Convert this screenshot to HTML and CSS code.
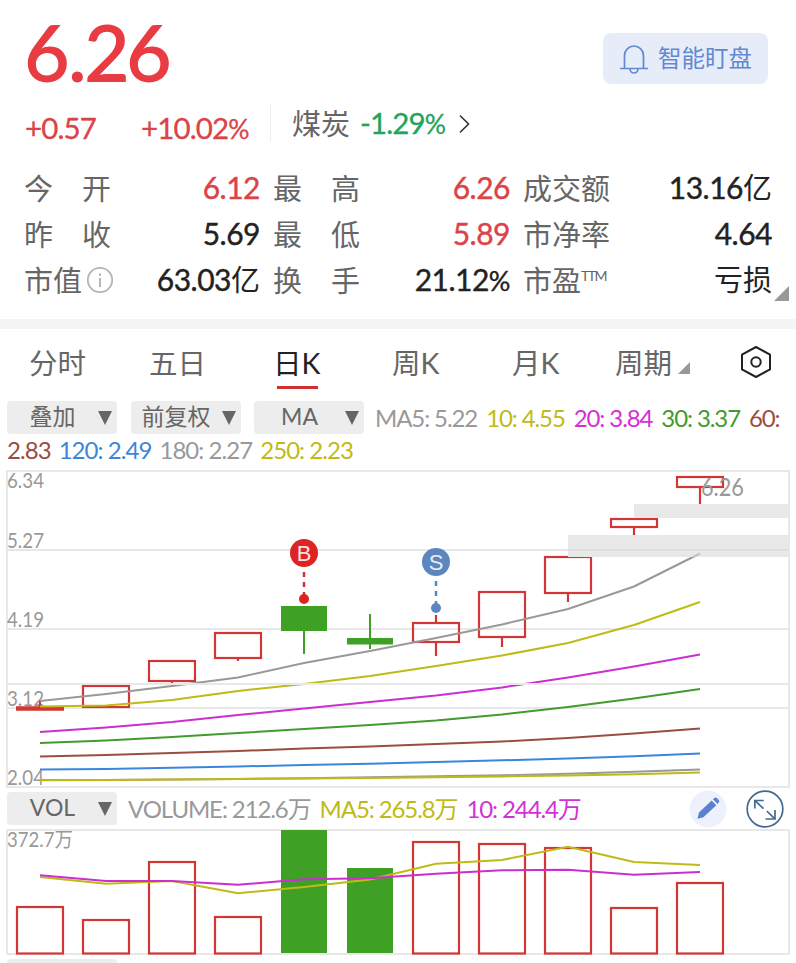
FILE: index.html
```html
<!DOCTYPE html>
<html lang="zh-CN">
<head>
    <meta charset="UTF-8">
    <meta name="viewport" content="width=device-width, initial-scale=1.0">
    <title>日K</title>
    <link rel="stylesheet" href="styles.css">
</head>
<body>
    <header class="quote">
        <div class="price">6<span>.</span>26</div>
        <button class="watch-btn">
            <svg width="30" height="30" viewBox="0 0 30 30" fill="none" stroke="#6288d2" stroke-width="1.7">
                <path d="M5.5 24.5V11.5a9.5 9.5 0 0 1 19 0v13M1 24.5h28M11 25a4 4 0 0 0 8 0"/>
            </svg>
            <span>智能盯盘</span>
        </button>
    </header>

    <div class="change-row">
        <span class="change">+0.57</span>
        <span class="percent">+10.02<small>%</small></span>
        <a class="sector">
            <span class="sector-name">煤炭</span>
            <span class="sector-change">-1.29<small>%</small></span>
            <svg width="11" height="20" viewBox="0 0 11 20" fill="none" stroke="#333" stroke-width="1.6"><path d="M1 1.5l8.5 8.5L1 18.5"/></svg>
        </a>
    </div>

    <section class="stats">
        <div class="stat"><span class="label wide"><i>今</i><i>开</i></span><b class="up">6.12</b></div>
        <div class="stat"><span class="label wide"><i>最</i><i>高</i></span><b class="up">6.26</b></div>
        <div class="stat"><span class="label">成交额</span><b>13.16<em>亿</em></b></div>
        <div class="stat"><span class="label wide"><i>昨</i><i>收</i></span><b>5.69</b></div>
        <div class="stat"><span class="label wide"><i>最</i><i>低</i></span><b class="up">5.89</b></div>
        <div class="stat"><span class="label">市净率</span><b>4.64</b></div>
        <div class="stat">
            <span class="label">市值<svg class="info" width="28" height="28" viewBox="0 0 28 28"><circle cx="14" cy="14" r="12.2" fill="none" stroke="#b5b5b5" stroke-width="1.8"/><path d="M13 7.5h2v2.3h-2zM13 12h2v9h-2z" fill="#b5b5b5"/></svg></span>
            <b>63.03<em>亿</em></b>
        </div>
        <div class="stat"><span class="label wide"><i>换</i><i>手</i></span><b>21.12<small>%</small></b></div>
        <div class="stat"><span class="label">市盈<sup>TTM</sup></span><b><em>亏损</em></b></div>
        <span class="corner"></span>
    </section>

    <nav class="tabs">
        <a class="tab">分时</a>
        <a class="tab">五日</a>
        <a class="tab active">日K</a>
        <a class="tab">周K</a>
        <a class="tab">月K</a>
        <a class="tab more">周期</a>
        <a class="settings">
            <svg width="32" height="34" viewBox="0 0 32 34" fill="none" stroke="#222" stroke-width="2" stroke-linejoin="round">
                <path d="M16 2l14 7.6v14.8L16 32 2 24.4V9.6z"/>
                <circle cx="16" cy="17" r="4.7"/>
            </svg>
        </a>
    </nav>

    <div class="toolbar">
        <button class="chip"><span>叠加</span></button>
        <button class="chip"><span>前复权</span></button>
        <button class="chip"><span>MA</span></button>
        <div class="legend">
            <span class="ma5">MA5: 5.22</span>
            <span class="ma10">10: 4.55</span>
            <span class="ma20">20: 3.84</span>
            <span class="ma30">30: 3.37</span>
            <span class="ma60">60:</span>
        </div>
    </div>
    <div class="legend second">
        <span class="ma60">2.83</span>
        <span class="ma120">120: 2.49</span>
        <span class="ma5">180: 2.27</span>
        <span class="ma10">250: 2.23</span>
    </div>

    <svg class="chart" width="796" height="326" viewBox="0 0 796 326">
        <g class="grid">
            <rect x="7" y="6" width="782" height="316"/>
            <path d="M7 85H789M7 164H789M7 243H789"/>
        </g>
        <g class="axis">
            <text x="7" y="23" textLength="37" lengthAdjust="spacingAndGlyphs">6.34</text>
            <text x="7" y="83" textLength="37" lengthAdjust="spacingAndGlyphs">5.27</text>
            <text x="7" y="162" textLength="37" lengthAdjust="spacingAndGlyphs">4.19</text>
            <text x="7" y="241" textLength="37" lengthAdjust="spacingAndGlyphs">3.12</text>
            <text x="7" y="320" textLength="37" lengthAdjust="spacingAndGlyphs">2.04</text>
        </g>

        <!-- candles, one every 66px -->
        <g class="rise">
            <path d="M40 236v6M172 216v2M238 193v3M436 150v8M436 177v14M502 172v10M568 128v9M634 62v8M700 22v17"/>
            <path d="M16 243.5H64" stroke-width="4.5"/>
            <rect x="83" y="221" width="46" height="21"/>
            <rect x="149" y="196" width="46" height="20"/>
            <rect x="215" y="168" width="46" height="25"/>
            <rect x="413" y="158" width="46" height="19"/>
            <rect x="479" y="127" width="46" height="45"/>
            <rect x="545" y="92" width="46" height="36"/>
            <rect x="611" y="54" width="46" height="8"/>
            <rect x="677" y="12" width="46" height="10"/>
        </g>
        <g class="fall">
            <rect x="281" y="141" width="46" height="25"/>
            <rect x="303" y="166" width="2" height="23"/>
            <rect x="347" y="173" width="46" height="6.5"/>
            <rect x="369" y="149" width="2" height="35"/>
        </g>

        <g class="lines">
            <polyline class="ma5" points="40,236 106,229 172,221 238,212.5 304,198 370,186 436,173 502,159.5 568,144 634,121.5 700,88.5"/>
            <polyline class="ma10" points="40,241.5 106,240.5 172,235 238,226 304,219 370,211 436,201 502,190.5 568,178 634,160 700,137"/>
            <polyline class="ma20" points="40,267 106,262.5 172,257 238,250 304,243.5 370,237 436,230.5 502,222.5 568,212.5 634,201.5 700,189.5"/>
            <polyline class="ma30" points="40,278 106,275.5 172,272 238,268 304,264 370,260 436,255.5 502,249.5 568,242 634,233.5 700,224"/>
            <polyline class="ma60" points="40,291.5 106,290 172,288 238,286 304,283.5 370,281.5 436,279 502,276.5 568,273 634,268.5 700,263.5"/>
            <polyline class="ma120" points="40,304.5 106,304 172,302.8 238,301.5 304,300 370,298.7 436,297 502,295.3 568,293.5 634,291.2 700,288.5"/>
            <polyline class="ma5" points="40,315 106,315 172,314.5 238,314 304,313.3 370,312.3 436,311.3 502,310.3 568,308.7 634,306.7 700,304.5"/>
            <polyline class="ma10" points="40,315.3 106,315 172,314.5 238,314 304,313.4 370,312.9 436,312.2 502,311.4 568,310.4 634,309.2 700,307.5"/>
        </g>

        <!-- price gaps -->
        <g class="gap">
            <rect x="634" y="39" width="155" height="14"/>
            <rect x="568" y="70" width="221" height="22"/>
            <path d="M7 219H789"/>
        </g>
        <path class="gap-line" d="M568 85H789"/>
        <path class="gap-ma" d="M693 92L700 88.5"/>
        <text class="last" x="701" y="31" textLength="43" lengthAdjust="spacingAndGlyphs">6.26</text>

        <g class="mark buy">
            <path d="M304 107v23"/>
            <circle cx="304" cy="134" r="5"/>
            <circle cx="304" cy="88" r="14"/>
            <text x="304" y="96">B</text>
        </g>
        <g class="mark sell">
            <path d="M436 116v23"/>
            <circle cx="436" cy="143" r="5"/>
            <circle cx="436" cy="97" r="14"/>
            <text x="436" y="105">S</text>
        </g>
    </svg>

    <div class="toolbar volume">
        <button class="chip"><span>VOL</span></button>
        <div class="legend">
            <span class="ma5">VOLUME: 212.6万</span>
            <span class="ma10">MA5: 265.8万</span>
            <span class="ma20">10: 244.4万</span>
        </div>
        <div class="tools">
            <svg width="38" height="38" viewBox="0 0 38 38">
                <circle cx="19" cy="19" r="18.5" fill="#edf1fb"/>
                <path d="M8.5 28.7l1.5-6.2L22.7 10.5l4.6 4.7L14.4 27.2zM24 9.3l1.3-1.2a2 2 0 0 1 2.7 0l1.7 1.8a2 2 0 0 1 0 2.7l-1.2 1.3z" fill="#5b80d0"/>
            </svg>
            <svg width="38" height="38" viewBox="0 0 38 38" fill="none" stroke="#456990" stroke-width="1.7">
                <circle cx="19" cy="19" r="17.8"/>
                <path d="M8.8 18.5V10.5h9M9 10.7l8.5 8M29 20v9h-9.5M20.8 21l8 7.8"/>
            </svg>
        </div>
    </div>

    <svg class="chart" width="796" height="133" viewBox="0 0 796 133">
        <g class="grid"><rect x="7" y="4" width="782" height="124"/></g>
        <text class="vol-max" x="7" y="21" textLength="66" lengthAdjust="spacingAndGlyphs">372.7万</text>
        <g class="rise">
            <rect x="17" y="81" width="46" height="46.5"/>
            <rect x="83" y="94" width="46" height="33.5"/>
            <rect x="149" y="36" width="46" height="91.5"/>
            <rect x="215" y="91" width="46" height="36.5"/>
            <rect x="413" y="16" width="46" height="111.5"/>
            <rect x="479" y="18" width="46" height="109.5"/>
            <rect x="545" y="22" width="46" height="105.5"/>
            <rect x="611" y="82" width="46" height="45.5"/>
            <rect x="677" y="57" width="46" height="70.5"/>
        </g>
        <g class="fall">
            <rect x="281" y="4" width="46" height="123"/>
            <rect x="347" y="42" width="46" height="85"/>
        </g>
        <g class="lines">
            <polyline class="ma10" points="40,51 106,57.7 172,55 238,67.3 304,61 370,53.5 436,37.7 502,34 568,20.7 634,36 700,39"/>
            <polyline class="ma20" points="40,49.3 106,55 172,55 238,58.7 304,53.3 370,52.3 436,47.7 502,44.3 568,43.7 634,48.7 700,46"/>
        </g>
    </svg>
    <div class="toolbar next">
        <button class="chip"></button>
    </div>
</body>
</html>
```
FILE: styles.css
```css
:root {
    --red: #e93b42;
    --rise: #d23635;
    --fall: #3ea126;
    --text: #222;
    --text-secondary: #666;
    --line: #e8e8e8;
}

* {
    box-sizing: border-box;
}

body {
    margin: 0;
    height: 963px;
    overflow: hidden;
    background: #fff;
    color: var(--text);
    font-family: Lato, "Noto Sans CJK SC", sans-serif;
}

button {
    border: none;
    padding: 0;
    font-family: inherit;
}

i, em {
    font-style: normal;
}

/* price */
.quote {
    display: flex;
    justify-content: space-between;
    align-items: flex-start;
    height: 105px;
    padding: 0 28px 0 24px;
}

.price {
    font-size: 79px;
    line-height: 103px;
    font-weight: 600;
    font-kerning: none;
    letter-spacing: -3.8px;
    color: var(--red);
}

.price span {
    margin: 0 1px 0 2px;
}

.watch-btn {
    display: flex;
    align-items: center;
    width: 165px;
    height: 51px;
    margin-top: 33px;
    padding-left: 16px;
    gap: 9px;
    border-radius: 8px;
    background: #e6edf9;
    color: #6288d2;
    font-size: 23.5px;
}

.watch-btn span {
    margin-top: -3px;
}

.change-row {
    display: flex;
    height: 60px;
    font-size: 29.5px;
    font-kerning: none;
    line-height: 46px;
    color: #dc4347;
}

.change-row small, .stat small {
    font-size: 0.9em;
}

.change, .percent, .sector-change {
    letter-spacing: -0.9px;
    -webkit-text-stroke: 0.3px currentColor;
}

.change {
    width: 141px;
    padding-left: 25px;
}

.percent {
    width: 129px;
}

.sector {
    display: flex;
    align-items: center;
    height: 37px;
    padding-left: 21px;
    border-left: 1px solid #eee;
}

.sector-name {
    width: 68px;
    color: var(--text-secondary);
    font-size: 29px;
}

.sector-change {
    width: 99px;
    color: #22a45c;
}

/* stats */
.stats {
    position: relative;
    display: grid;
    grid-template-columns: 236px 237px 249px;
    column-gap: 13px;
    grid-auto-rows: 46px;
    height: 154px;
    padding-left: 24px;
}

.stat {
    display: flex;
    justify-content: space-between;
    line-height: 47px;
    font-size: 29px;
    white-space: nowrap;
}

.label {
    display: flex;
    color: var(--text-secondary);
}

.wide {
    width: 87px;
    justify-content: space-between;
}

.info {
    margin: 9px 0 0 4px;
}

.label sup {
    font-size: 14px;
    line-height: 37px;
    letter-spacing: -1.5px;
    vertical-align: top;
}

.stat b {
    font-weight: 400;
    font-size: 30px;
    line-height: 45px;
    font-kerning: none;
    letter-spacing: -0.5px;
    -webkit-text-stroke: 0.4px currentColor;
}

.stat em {
    font-size: 29px;
    letter-spacing: 0;
    -webkit-text-stroke: 0;
}

.stat .up {
    color: #dc4347;
}

.corner {
    position: absolute;
    right: 7px;
    bottom: 18px;
    border-left: 15px solid transparent;
    border-bottom: 15px solid #999;
}

/* tabs */
.tabs {
    display: flex;
    height: 82px;
    padding-left: 29px;
    border-top: 10px solid #f4f4f4;
    font-size: 28.5px;
    line-height: 69px;
    color: var(--text-secondary);
}

.tab {
    flex: none;
    width: 120px;
}

.tab:nth-child(3) {
    width: 123px;
    padding-left: 4px;
}

.tab:nth-child(3)::after {
    content: "";
    display: block;
    width: 41px;
    height: 3px;
    margin: -12px 0 0 4px;
    background: #d23030;
}

.tab:nth-child(5) {
    width: 103px;
}

.active {
    color: var(--text);
}

.more::after {
    content: "";
    display: inline-block;
    margin-left: 6px;
    border-left: 12px solid transparent;
    border-bottom: 12px solid #a09595;
}

.settings {
    padding-top: 16px;
    padding-left: 5px;
    line-height: 0;
}

/* toolbar */
.toolbar {
    display: flex;
    height: 33px;
    padding-left: 7px;
}

.chip {
    display: flex;
    flex: none;
    align-items: center;
    justify-content: space-between;
    width: 110px;
    height: 33px;
    margin-right: 13.5px;
    padding-right: 5px;
    border-radius: 4px;
    background: #ededed;
    color: var(--text-secondary);
    font-size: 23px;
    line-height: 29px;
}

.chip span {
    width: 92px;
    margin-top: -3px;
    text-align: center;
    white-space: nowrap;
}

.chip::after {
    content: "";
    flex: none;
    border: 7px solid transparent;
    border-top: 14px solid #666;
    border-bottom: none;
}

.legend {
    display: flex;
    gap: 9px;
    margin-left: -2.5px;
    font-size: 24px;
    line-height: 33px;
    letter-spacing: -1.1px;
    white-space: nowrap;
}

.second {
    height: 31px;
    gap: 8px;
    margin-left: 7px;
    line-height: 31px;
    letter-spacing: -0.95px;
}

.ma5 { color: #999; stroke: #999; }
.ma10 { color: #bfbb16; stroke: #bfbb16; }
.ma20 { color: #d42fd8; stroke: #cc2fd0; }
.ma30 { color: #429b2c; stroke: #429b2c; }
.ma60 { color: #9b4d41; stroke: #9b4d41; }
.ma120 { color: #3b86dc; stroke: #3b86dc; }

.tools {
    display: flex;
    gap: 19px;
    margin: -2px 12px 0 auto;
}

.volume {
    margin-top: 1px;
    height: 34px;
}

/* charts */
.chart {
    display: block;
}

.grid {
    fill: none;
    stroke: var(--line);
    stroke-width: 2;
}

.axis, .vol-max, .last {
    fill: #999;
    font-size: 20.5px;
    font-kerning: none;
}

.last {
    font-size: 25px;
}

.rise {
    fill: none;
    stroke: var(--rise);
    stroke-width: 2.2;
}

.fall {
    fill: var(--fall);
}

.lines {
    fill: none;
    stroke-width: 2;
}

.gap {
    fill: #e8e8e8;
}

.gap path {
    stroke: var(--line);
    stroke-width: 2;
}

.gap-line {
    stroke: #dfdfdf;
    stroke-width: 2;
}

.gap-ma {
    stroke: #c4c4c4;
    stroke-width: 2;
}

.mark path {
    stroke-width: 2.5;
    stroke-dasharray: 5;
}

.mark text {
    fill: #fff;
    opacity: 0.85;
    font-size: 22px;
    font-family: "Liberation Sans", sans-serif;
    text-anchor: middle;
}

.buy { fill: #dd2424; }
.buy path { stroke: #c63434; }
.sell { fill: #5d86bf; }
.sell path { stroke: #5d86bf; }
```
